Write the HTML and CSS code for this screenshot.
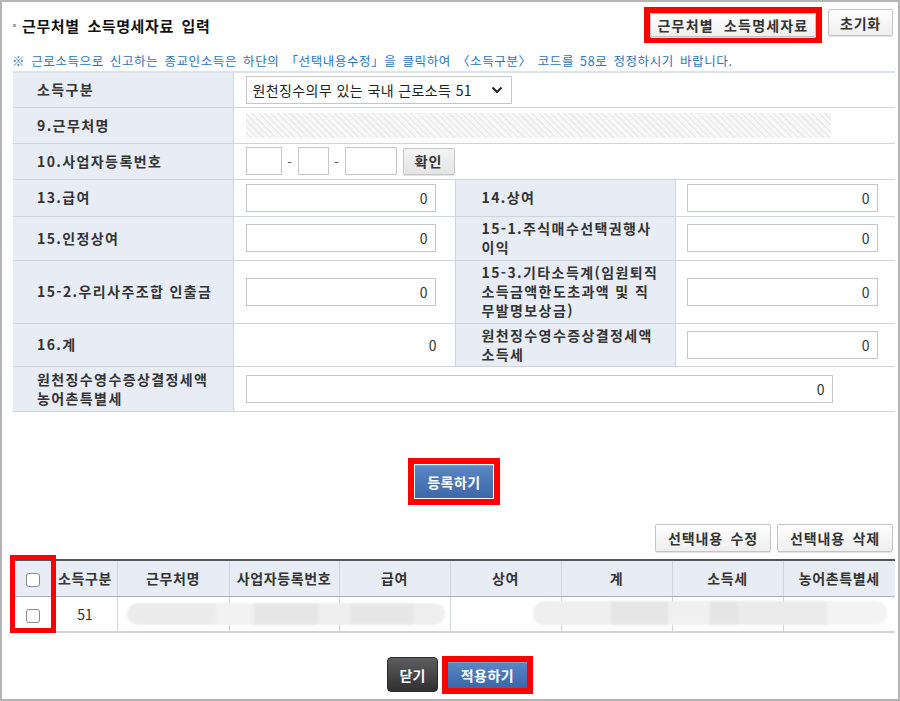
FILE: index.html
```html
<!DOCTYPE html>
<html lang="ko">
<head>
<meta charset="utf-8">
<title>근무처별 소득명세자료 입력</title>
<link rel="stylesheet" href="styles.css">
</head>
<body>
<div class="frame">
  <div class="head">
    <h1 class="title">근무처별 소득명세자료 입력</h1>
    <div class="head-btns">
      <span class="hl"><button class="btn btn-wide">근무처별 소득명세자료</button></span>
      <button class="btn btn-reset">초기화</button>
    </div>
  </div>
  <p class="notice">※ 근로소득으로 신고하는 종교인소득은 하단의 「선택내용수정」을 클릭하여 〈소득구분〉 코드를 58로 정정하시기 바랍니다.</p>

  <table class="form">
    <colgroup><col class="c1"><col class="c2"><col class="c3"><col class="c4"></colgroup>
    <tr class="r35">
      <th class="lbl">소득구분</th>
      <td class="val" colspan="3">
        <div class="select"><span class="select-text">원천징수의무 있는 국내 근로소득 51</span>
          <svg class="chev" width="12" height="8" viewBox="0 0 12 8"><path d="M1.5 1.5 L6 6 L10.5 1.5" fill="none" stroke="#222" stroke-width="2"/></svg>
        </div>
      </td>
    </tr>
    <tr class="r36">
      <th class="lbl">9.근무처명</th>
      <td class="val" colspan="3"><div class="hatch"></div></td>
    </tr>
    <tr class="r36">
      <th class="lbl">10.사업자등록번호</th>
      <td class="val" colspan="3">
        <div class="bizno">
          <input class="box b1" type="text"><span class="dash">-</span><input class="box b2" type="text"><span class="dash">-</span><input class="box b3" type="text"><button class="btn btn-check">확인</button>
        </div>
      </td>
    </tr>
    <tr class="r37">
      <th class="lbl">13.급여</th>
      <td class="val"><input class="num" type="text" value="0"></td>
      <th class="lbl lbl2">14.상여</th>
      <td class="val val2"><input class="num" type="text" value="0"></td>
    </tr>
    <tr class="r44">
      <th class="lbl">15.인정상여</th>
      <td class="val"><input class="num" type="text" value="0"></td>
      <th class="lbl lbl2">15-1.주식매수선택권행사<br>이익</th>
      <td class="val val2"><input class="num" type="text" value="0"></td>
    </tr>
    <tr class="r63">
      <th class="lbl">15-2.우리사주조합 인출금</th>
      <td class="val"><input class="num" type="text" value="0"></td>
      <th class="lbl lbl2">15-3.기타소득계(임원퇴직<br>소득금액한도초과액 및 직<br>무발명보상금)</th>
      <td class="val val2"><input class="num" type="text" value="0"></td>
    </tr>
    <tr class="r43">
      <th class="lbl">16.계</th>
      <td class="val sum">0</td>
      <th class="lbl lbl2">원천징수영수증상결정세액<br>소득세</th>
      <td class="val val2"><input class="num" type="text" value="0"></td>
    </tr>
    <tr class="r45">
      <th class="lbl">원천징수영수증상결정세액<br>농어촌특별세</th>
      <td class="val" colspan="3"><input class="num num-wide" type="text" value="0"></td>
    </tr>
  </table>

  <div class="reg">
    <span class="hl"><button class="btn-blue btn-reg">등록하기</button></span>
  </div>

  <div class="list-btns">
    <button class="btn btn-sel">선택내용 수정</button>
    <button class="btn btn-sel">선택내용 삭제</button>
  </div>

  <div class="grid-wrap">
    <table class="grid">
      <colgroup>
        <col class="g0"><col class="g1"><col class="g2"><col class="g3"><col class="g4"><col class="g5"><col class="g6"><col class="g7"><col class="g8">
      </colgroup>
      <tr class="ghead">
        <th><span class="chk"></span></th>
        <th>소득구분</th>
        <th>근무처명</th>
        <th>사업자등록번호</th>
        <th>급여</th>
        <th>상여</th>
        <th>계</th>
        <th>소득세</th>
        <th>농어촌특별세</th>
      </tr>
      <tr class="grow">
        <td><span class="chk"></span></td>
        <td>51</td>
        <td></td><td></td><td></td><td></td><td></td><td></td><td></td>
      </tr>
    </table>
    <div class="blur blur1"></div>
    <div class="blur blur2"></div>
    <div class="hl-col"></div>
  </div>

  <div class="foot">
    <button class="btn-dark">닫기</button>
    <span class="hl hl-apply"><button class="btn-blue btn-apply">적용하기</button></span>
  </div>
</div>
</body>
</html>
```
FILE: styles.css
```css
* { box-sizing: border-box; }
html, body { margin: 0; padding: 0; background: #fff; }
body {
  font-family: "Noto Sans CJK KR", "Noto Sans", "Liberation Sans", sans-serif;
  font-size: 14px;
  color: #333;
}
.frame {
  width: 900px;
  height: 701px;
  border: 2px solid #b4b4b4;
  padding: 5px 3px 0 11px;
  overflow: hidden;
}
button { font-family: inherit; cursor: pointer; }

.head {
  display: flex;
  justify-content: space-between;
  align-items: center;
  height: 36px;
}
.title {
  margin: 0;
  display: flex;
  align-items: center;
  font-size: 15px;
  font-weight: bold;
  color: #111;
  letter-spacing: 0.6px;
  word-spacing: 3px;
}
.title::before {
  content: "";
  width: 3px;
  height: 3px;
  background: #aaa;
  margin-right: 6px;
}
.head-btns {
  display: flex;
  align-items: center;
  gap: 6px;
  margin-right: 2px;
}
.hl {
  display: inline-flex;
  border: 6px solid #ff0000;
}
.btn {
  height: 27px;
  padding: 0;
  border: 1px solid #c4c4c4;
  border-radius: 2px;
  background: linear-gradient(#ffffff, #eeeeee);
  box-shadow: 0 1px 0 #e2e2e2;
  font-size: 14px;
  font-weight: bold;
  color: #333;
  letter-spacing: 0.8px;
  word-spacing: 3px;
}
.btn-wide { width: 166px; height: 24px; letter-spacing: 1.2px; word-spacing: 5px; }
.btn-reset { width: 65px; margin-top: -5px; }

.notice {
  margin: 9px 0 1px -1px;
  line-height: 18px;
  font-size: 12.5px;
  color: #2a74bb;
  letter-spacing: 0.6px;
  word-spacing: 2px;
  white-space: nowrap;
}

.form {
  width: 882px;
  border-collapse: collapse;
  table-layout: fixed;
  border-top: 2px solid #dde3eb;
}
.form .c1 { width: 220px; }
.form .c2 { width: 222px; }
.form .c3 { width: 220px; }
.form .c4 { width: 220px; }
.form th, .form td {
  border-bottom: 1px solid #ccd4de;
  padding: 0;
  vertical-align: middle;
}
.r35 { height: 35px; }
.r36 { height: 36px; }
.r37 { height: 37px; }
.r43 { height: 43px; }
.r44 { height: 44px; }
.r45 { height: 45px; }
.r63 { height: 63px; }
.lbl {
  background: #e8edf5;
  text-align: left;
  padding-left: 24px !important;
  font-size: 14px;
  font-weight: bold;
  color: #333;
  letter-spacing: 1.4px;
  line-height: 19px;
  white-space: nowrap;
  border-right: 1px solid #ccd4de;
}
.lbl2 {
  padding-left: 26px !important;
  border-left: 1px solid #ccd4de;
}
.val { padding-left: 12px !important; }
.val2 { padding-left: 11px !important; }
.sum { text-align: right; padding-right: 18px !important; font-size: 14px; color: #333; }

.num {
  display: block;
  width: 190px;
  height: 28px;
  border: 1px solid #c6c6c6;
  background: #fff;
  text-align: right;
  padding: 0 7px 0 4px;
  font-family: inherit;
  font-size: 14px;
  color: #333;
}
.val2 .num { width: 191px; }
.num-wide { width: 587px; }

.select {
  display: flex;
  align-items: center;
  justify-content: space-between;
  width: 266px;
  height: 28px;
  border: 1px solid #c6c6c6;
  padding: 0 8px 0 6px;
  font-size: 14px;
  color: #222;
  letter-spacing: 0.4px;
  white-space: nowrap;
}
.hatch {
  width: 585px;
  height: 25px;
  background: repeating-linear-gradient(45deg, #f7f7f7 0 3px, #ebebeb 3px 4.5px);
}
.bizno { display: flex; align-items: center; }
.box {
  height: 28px;
  border: 1px solid #c6c6c6;
  background: #fff;
  padding: 0;
}
.b1 { width: 36px; }
.b2 { width: 31px; }
.b3 { width: 52px; }
.dash { width: 16px; text-align: center; color: #555; font-size: 13px; }
.btn-check { width: 52px; margin-left: 6px; background: linear-gradient(#f4f4f4, #e4e4e4); }

.reg {
  display: flex;
  justify-content: center;
  margin-top: 46px;
}
.reg .hl { padding: 1px; }
.btn-blue {
  border: 0;
  border-top: 1px solid #7b9fd1;
  background: linear-gradient(#5a86c3, #3c67a8);
  color: #fff;
  font-size: 14px;
  font-weight: bold;
  letter-spacing: 0.5px;
  padding: 0;
}
.btn-reg { width: 78px; height: 33px; }

.list-btns {
  display: flex;
  justify-content: flex-end;
  gap: 6px;
  margin: 19px 2px 0 0;
}
.btn-sel { width: 116px; height: 28px; }

.grid-wrap { position: relative; margin-top: 7px; width: 882px; }
.grid {
  width: 882px;
  border-collapse: collapse;
  table-layout: fixed;
  border-top: 2px solid #555;
  border-bottom: 2px solid #d2d2d2;
}
.g0 { width: 40px; }
.g1 { width: 64px; }
.g2 { width: 112px; }
.g3 { width: 110px; }
.g4 { width: 111px; }
.g5 { width: 111px; }
.g6 { width: 111px; }
.g7 { width: 111px; }
.g8 { width: 112px; }
.grid th, .grid td {
  padding: 0 1px;
  text-align: center;
  white-space: nowrap;
  border-left: 1px solid #ccd4de;
  vertical-align: middle;
}
.grid th:first-child, .grid td:first-child { border-left: 0; }
.ghead { height: 37px; background: #e8edf5; }
.ghead th {
  font-weight: bold;
  font-size: 14px;
  color: #333;
  letter-spacing: 0.6px;
  border-bottom: 1px solid #a9b0bb;
}
.grow { height: 35px; }
.grow td { font-size: 14px; color: #333; }
.chk {
  display: inline-block;
  width: 14px;
  height: 14px;
  border: 1.5px solid #8a8a8a;
  border-radius: 3px;
  background: #fff;
  vertical-align: middle;
}
.blur {
  position: absolute;
  height: 22px;
  border-radius: 11px;
  filter: blur(1px);
}
.blur1 {
  left: 114px;
  top: 44px;
  width: 318px;
  background: linear-gradient(90deg, #ececec 0 28%, #f1f1f1 28% 40%, #e6e6e6 40% 60%, #efefef 60% 70%, #e7e7e7 70% 90%, #eeeeee 90%);
}
.blur2 {
  left: 520px;
  top: 42px;
  width: 354px;
  height: 24px;
  background: linear-gradient(90deg, #efefef 0 22%, #e6e6e6 22% 38%, #f0f0f0 38% 50%, #e5e5e5 50% 58%, #ebebeb 58% 83%, #f3f3f3 83%);
}
.hl-col {
  position: absolute;
  left: -3px;
  top: -4px;
  width: 46px;
  height: 78px;
  border: 5px solid #ff0000;
}

.foot {
  display: flex;
  justify-content: center;
  align-items: center;
  gap: 4px;
  margin-top: 23px;
  padding-left: 12px;
}
.btn-dark {
  width: 51px;
  height: 35px;
  border: 1px solid #2a2a2a;
  border-radius: 4px;
  background: linear-gradient(#5e5e5e, #303030);
  color: #fff;
  font-size: 14px;
  font-weight: bold;
  padding: 0;
}
.btn-apply { width: 79px; height: 26px; }
```
